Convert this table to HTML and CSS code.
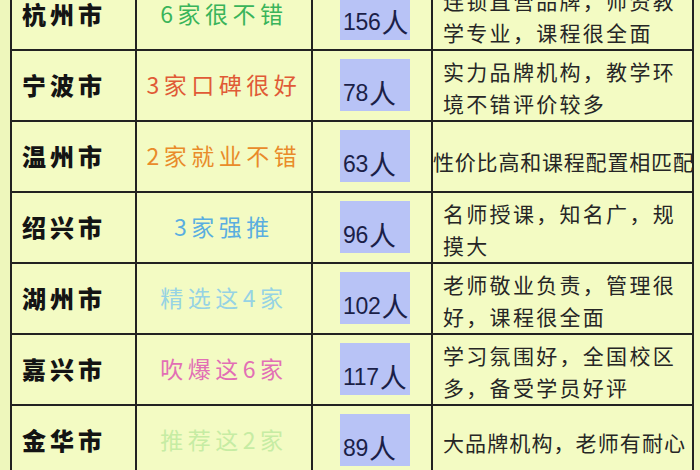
FILE: index.html
```html
<!DOCTYPE html>
<html lang="zh-CN">
<head>
<meta charset="utf-8">
<link rel="stylesheet" href="styles.css">
</head>
<body>
<div class="table">
  <div class="city">杭州市</div>
  <div class="tag c-green">6家很不错</div>
  <div class="count"><span class="box">156<span class="ren">人</span></span></div>
  <div class="desc">连锁直营品牌，师资教<br>学专业，课程很全面</div>

  <div class="city">宁波市</div>
  <div class="tag c-red">3家口碑很好</div>
  <div class="count"><span class="box">78<span class="ren">人</span></span></div>
  <div class="desc">实力品牌机构，教学环<br>境不错评价较多</div>

  <div class="city">温州市</div>
  <div class="tag c-orange">2家就业不错</div>
  <div class="count"><span class="box">63<span class="ren">人</span></span></div>
  <div class="desc desc-full">性价比高和课程配置相匹配</div>

  <div class="city">绍兴市</div>
  <div class="tag c-blue">3家强推</div>
  <div class="count"><span class="box">96<span class="ren">人</span></span></div>
  <div class="desc">名师授课，知名广，规<br>摸大</div>

  <div class="city">湖州市</div>
  <div class="tag c-cyan">精选这4家</div>
  <div class="count"><span class="box">102<span class="ren">人</span></span></div>
  <div class="desc">老师敬业负责，管理很<br>好，课程很全面</div>

  <div class="city">嘉兴市</div>
  <div class="tag c-pink">吹爆这6家</div>
  <div class="count"><span class="box">117<span class="ren">人</span></span></div>
  <div class="desc">学习氛围好，全国校区<br>多，备受学员好评</div>

  <div class="city">金华市</div>
  <div class="tag c-lime">推荐这2家</div>
  <div class="count"><span class="box">89<span class="ren">人</span></span></div>
  <div class="desc desc-tight">大品牌机构，老师有耐心</div>
</div>
</body>
</html>
```
FILE: styles.css
```css
html, body {
  margin: 0;
  padding: 0;
}
body {
  width: 700px;
  height: 470px;
  overflow: hidden;
  background: #eef7bc;
  font-family: "Noto Sans CJK SC", "Noto Sans", sans-serif;
}
.table {
  display: grid;
  grid-template-columns: 123px 174px 118px 259px;
  grid-auto-rows: 69px;
  gap: 2px;
  padding: 2px;
  width: max-content;
  margin: -22px 0 0 10px;
  background: #222;
}
.table > div {
  background: #f3fbc3;
}
.city {
  display: flex;
  align-items: center;
  padding-left: 10px;
  padding-bottom: 2px;
  font-size: 24px;
  font-weight: 900;
  letter-spacing: 4px;
  color: #141414;
}
.tag {
  display: flex;
  align-items: center;
  justify-content: center;
  padding-bottom: 4px;
  font-size: 23px;
  letter-spacing: 4.5px;
  white-space: nowrap;
}
.c-green { color: #39b45a; }
.c-red { color: #e05a36; }
.c-orange { color: #e98b2a; }
.c-blue { color: #5aaee0; }
.c-cyan { color: #96d3e4; }
.c-pink { color: #e26fb5; }
.c-lime { color: #c6eca3; }

.count {
  padding: 8px 0 0 27px;
}
.box {
  display: flex;
  align-items: flex-end;
  box-sizing: border-box;
  width: 70px;
  height: 52px;
  padding: 0 0 7px 3px;
  background: #b8c3f6;
  font-family: "Liberation Sans", Arial, sans-serif;
  font-size: 23px;
  line-height: 22px;
  letter-spacing: -0.3px;
  color: #1b1f48;
  white-space: nowrap;
}
.ren {
  font-family: "Noto Sans CJK SC", sans-serif;
  font-size: 27px;
  line-height: 22px;
  margin-left: 1px;
}
.desc {
  display: flex;
  align-items: center;
  padding: 3px 0 0 10px;
  font-size: 21px;
  line-height: 32px;
  letter-spacing: 2.3px;
  color: #262626;
  white-space: nowrap;
}
.desc-full {
  padding-left: 0;
  padding-top: 8px;
  letter-spacing: 0.8px;
}
.desc-tight {
  letter-spacing: 1.1px;
}
```
